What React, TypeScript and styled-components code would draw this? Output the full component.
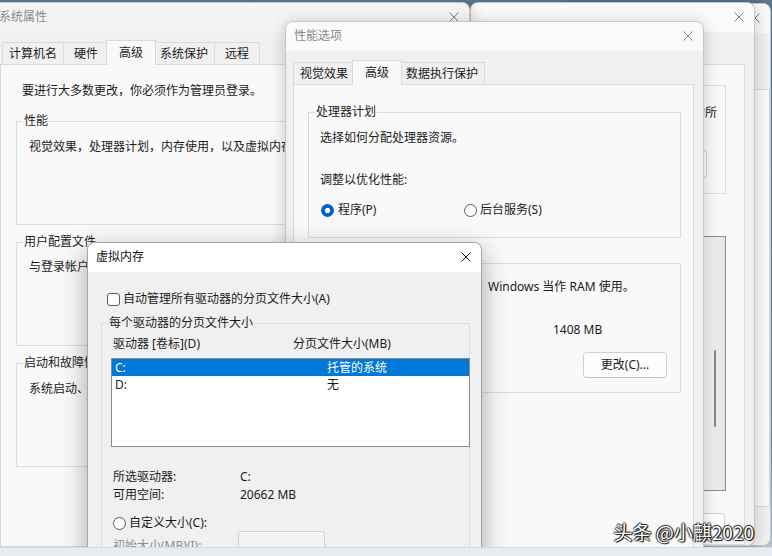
import React from 'react';
import styled, { createGlobalStyle, css } from 'styled-components';

const GlobalStyle = createGlobalStyle`
  html, body { margin: 0; padding: 0; }
  body {
    font-family: "Noto Sans", "Noto Sans CJK SC", sans-serif;
    font-size: 12px;
    line-height: 16px;
    color: #1b1b1b;
    background: #6f8aa0;
  }
  #root { width: 772px; height: 556px; }
`;

const Desktop = styled.main`
  position: relative;
  width: 772px;
  height: 556px;
  overflow: hidden;
  background: linear-gradient(180deg, #5d7b93 0%, #7893a8 80%, #c9d6e0 100%);
`;

type WinProps = {
  $left: number;
  $top: number;
  $width: number;
  $height: number;
  $z: number;
  $active?: boolean;
};

// dialogs sit on a free desktop, so the window itself is placed absolutely
const Window = styled.section<WinProps>`
  position: absolute;
  left: ${p => p.$left}px;
  top: ${p => p.$top}px;
  width: ${p => p.$width}px;
  height: ${p => p.$height}px;
  z-index: ${p => p.$z};
  box-sizing: border-box;
  display: flex;
  flex-direction: column;
  background: #f0f0f0;
  border: 1px solid ${p => (p.$active ? 'rgba(0,0,0,0.3)' : 'rgba(0,0,0,0.17)')};
  border-radius: 8px;
  overflow: hidden;
  box-shadow: ${p =>
    p.$active ? '0 8px 26px rgba(0,0,0,0.34)' : '0 2px 16px rgba(0,0,0,0.2)'};
`;

const TitleBar = styled.header<{ $active?: boolean; $tone?: string }>`
  flex: none;
  height: 29px;
  box-sizing: border-box;
  display: flex;
  align-items: center;
  justify-content: space-between;
  padding: 0 10px 1px 8px;
  background: ${p => p.$tone ?? '#fafafa'};
  color: ${p => (p.$active ? '#111' : '#8a8a8a')};
`;

const Title = styled.span`
  white-space: nowrap;
`;

const CloseGlyph = ({ active }: { active?: boolean }) => (
  <svg width="10" height="10" viewBox="0 0 10 10">
    <path
      d="M0.5 0.5L9.5 9.5M9.5 0.5L0.5 9.5"
      stroke={active ? '#1a1a1a' : '#7d7d7d'}
      strokeWidth="1"
      fill="none"
    />
  </svg>
);

const Body = styled.div<{ $pad: string }>`
  flex: 1;
  min-height: 0;
  display: flex;
  flex-direction: column;
  padding: ${p => p.$pad};
`;

const TabRow = styled.div<{ $indent?: number }>`
  flex: none;
  display: flex;
  align-items: flex-end;
  height: 25px;
  padding-left: ${p => p.$indent ?? 0}px;
  margin-bottom: -1px;
  position: relative;
  z-index: 1;
`;

const Tab = styled.div<{ $selected?: boolean }>`
  box-sizing: border-box;
  height: 22px;
  min-width: 46px;
  padding: 0 6px;
  margin: 0 -1px 1px 0;
  display: flex;
  align-items: center;
  justify-content: center;
  white-space: nowrap;
  background: #f0f0f0;
  border: 1px solid #d9d9d9;
  border-bottom: none;
  ${p =>
    p.$selected &&
    css`
      height: 25px;
      min-width: 50px;
      margin: 0 -3px 0 -2px;
      background: #f9f9f9;
      position: relative;
      z-index: 2;
    `}
`;

const TabPanel = styled.div<{ $pad: string }>`
  flex: 1;
  min-height: 0;
  display: flex;
  flex-direction: column;
  background: #f9f9f9;
  border: 1px solid #d9d9d9;
  padding: ${p => p.$pad};
`;

const Group = styled.fieldset<{ $height?: number; $mt?: number; $grow?: boolean }>`
  flex: ${p => (p.$grow ? 1 : 'none')};
  margin: ${p => p.$mt ?? 0}px 0 0 0;
  padding: 0;
  min-width: 0;
  box-sizing: border-box;
  height: ${p => (p.$height ? `${p.$height}px` : 'auto')};
  border: 1px solid #dcdcdc;
  display: flex;
  flex-direction: column;
`;

const Legend = styled.legend`
  margin-left: 6px;
  padding: 0 1px;
  line-height: 16px;
  white-space: nowrap;
`;

const GroupBody = styled.div<{ $pad: string }>`
  flex: 1;
  min-height: 0;
  display: flex;
  flex-direction: column;
  padding: ${p => p.$pad};
`;

const Line = styled.div<{ $mt?: number; $indent?: number; $muted?: boolean; $wrap?: boolean }>`
  margin-top: ${p => p.$mt ?? 0}px;
  margin-left: ${p => p.$indent ?? 0}px;
  white-space: ${p => (p.$wrap ? 'normal' : 'nowrap')};
  color: ${p => (p.$muted ? '#8d8d8d' : 'inherit')};
`;

const OptionRow = styled.div<{ $mt?: number; $cols?: string; $indent?: number }>`
  margin-top: ${p => p.$mt ?? 0}px;
  margin-left: ${p => p.$indent ?? 0}px;
  display: grid;
  grid-template-columns: ${p => p.$cols ?? 'auto'};
  align-items: center;
  white-space: nowrap;
`;

const Option = styled.label<{ $gap?: number }>`
  display: flex;
  align-items: center;
  gap: ${p => p.$gap ?? 4}px;
  white-space: nowrap;
`;

const RadioDot = styled.span<{ $on?: boolean }>`
  flex: none;
  box-sizing: border-box;
  width: 13px;
  height: 13px;
  border-radius: 50%;
  ${p =>
    p.$on
      ? css`
          background: radial-gradient(circle, #ffffff 0 2.4px, #0067c0 3px);
        `
      : css`
          background: #fcfcfc;
          border: 1px solid #5c5c5c;
        `}
`;

const CheckBox = styled.span`
  flex: none;
  box-sizing: border-box;
  width: 13px;
  height: 13px;
  border-radius: 3px;
  border: 1px solid #5c5c5c;
  background: #fcfcfc;
`;

const Button = styled.button<{ $w: number; $h: number; $mt?: number; $mr?: number }>`
  flex: none;
  align-self: flex-end;
  box-sizing: border-box;
  width: ${p => p.$w}px;
  height: ${p => p.$h}px;
  margin: ${p => p.$mt ?? 0}px ${p => p.$mr ?? 0}px 0 0;
  padding: 0;
  font: inherit;
  color: #1b1b1b;
  background: #fdfdfd;
  border: 1px solid #d2d2d2;
  border-bottom-color: #c2c2c2;
  border-radius: 4px;
`;

const ListBox = styled.div<{ $h: number; $mt?: number }>`
  flex: none;
  box-sizing: border-box;
  height: ${p => p.$h}px;
  margin: ${p => p.$mt ?? 0}px -1px 0 0;
  background: #ffffff;
  border: 1px solid #8c8c8c;
  display: flex;
  flex-direction: column;
`;

const ListRow = styled.div<{ $selected?: boolean }>`
  height: 17px;
  display: grid;
  grid-template-columns: 212px auto;
  align-items: center;
  padding-left: 3px;
  white-space: nowrap;
  ${p =>
    p.$selected &&
    css`
      background: #0078d7;
      color: #ffffff;
    `}
`;

const ListHeader = styled.div`
  margin-left: 2px;
  display: grid;
  grid-template-columns: 180px auto;
  white-space: nowrap;
`;

const InfoGrid = styled.div<{ $mt?: number }>`
  margin: ${p => p.$mt ?? 0}px 0 0 2px;
  display: grid;
  grid-template-columns: 127px auto;
  grid-auto-rows: 18px;
  white-space: nowrap;
`;

const SizeRow = styled.div`
  display: grid;
  grid-template-columns: 125px auto;
  margin-left: 2px;
  white-space: nowrap;
  color: #8d8d8d;
`;

const SizeLabel = styled.span`
  padding-top: 7px;
`;

const Field = styled.div`
  box-sizing: border-box;
  width: 87px;
  height: 23px;
  background: #f3f3f3;
  border: 1px solid #cfcfcf;
  border-radius: 3px;
`;

const Listing = styled.div<{ $h: number; $mt?: number }>`
  flex: none;
  box-sizing: border-box;
  height: ${p => p.$h}px;
  margin-top: ${p => p.$mt ?? 0}px;
  background: #ffffff;
  border: 1px solid #8c8c8c;
  display: flex;
  justify-content: flex-end;
`;

const ScrollTrack = styled.div`
  width: 21px;
  background: linear-gradient(90deg, #f4f4f4, #e4e4e4);
`;

const ScrollThumb = styled.div`
  width: 2px;
  height: 77px;
  margin: 113px 0 0 10px;
  border-radius: 1px;
  background: #8a8a8a;
`;

const Taskbar = styled.footer`
  position: absolute;
  left: 0;
  right: 0;
  bottom: 0;
  height: 8px;
  z-index: 10;
  background: #e6ecf1;
  border-top: 1px solid rgba(0, 0, 0, 0.07);
`;

const Watermark = styled.div`
  position: absolute;
  right: 18px;
  bottom: 13px;
  z-index: 11;
  font-family: "Noto Sans CJK SC", "Noto Sans", sans-serif;
  font-size: 19px;
  line-height: 22px;
  color: #ffffff;
  white-space: nowrap;
  text-shadow: 1px 1px 1px #111, -1px 0 1px #222, 0 -1px 1px #222, 1px 0 1px #222;
`;

export default function App() {
  return (
    <>
      <GlobalStyle />
      <Desktop>
        {/* window furthest back, only its right edge shows */}
        <Window $left={560} $top={3} $width={211} $height={543} $z={1}>
          <TitleBar>
            <Title />
            <CloseGlyph />
          </TitleBar>
          <Body $pad="56px 0 38px 0">
            <TabPanel $pad="0" />
          </Body>
        </Window>

        <Window $left={470} $top={2} $width={285} $height={544} $z={2}>
          <TitleBar>
            <Title />
            <CloseGlyph />
          </TitleBar>
          <Body $pad="8px 9px 0 9px">
            <TabRow $indent={2}>
              <Tab>常规</Tab>
              <Tab $selected>高级</Tab>
            </TabRow>
            <TabPanel $pad="12px 18px 0 18px">
              <Group $height={117}>
                <Legend>用户配置文件</Legend>
                <GroupBody $pad="12px 7px 0 13px">
                  <Line $wrap>此处的设置将应用于此台计算机上的所有用户。</Line>
                  <Button $w={84} $h={28} $mt={13} $mr={11}>
                    设置(E)...
                  </Button>
                </GroupBody>
              </Group>
              <Listing $h={255} $mt={42}>
                <ScrollTrack>
                  <ScrollThumb />
                </ScrollTrack>
              </Listing>
              <Button $w={84} $h={27} $mt={22} $mr={1}>
                确定
              </Button>
            </TabPanel>
          </Body>
        </Window>

        <Window $left={-10} $top={2} $width={480} $height={546} $z={3}>
          <TitleBar $tone="#f4f4f4">
            <Title>系统属性</Title>
            <CloseGlyph />
          </TitleBar>
          <Body $pad="8px 9px 0 9px">
            <TabRow $indent={2}>
              <Tab>计算机名</Tab>
              <Tab>硬件</Tab>
              <Tab $selected>高级</Tab>
              <Tab>系统保护</Tab>
              <Tab>远程</Tab>
            </TabRow>
            <TabPanel $pad="18px 14px 0 15px">
              <Line $indent={6}>要进行大多数更改，你必须作为管理员登录。</Line>
              <Group $height={112} $mt={14}>
                <Legend>性能</Legend>
                <GroupBody $pad="10px 12px 0 12px">
                  <Line>视觉效果，处理器计划，内存使用，以及虚拟内存</Line>
                </GroupBody>
              </Group>
              <Group $height={112} $mt={9}>
                <Legend>用户配置文件</Legend>
                <GroupBody $pad="9px 12px 0 12px">
                  <Line>与登录帐户相关的桌面设置</Line>
                </GroupBody>
              </Group>
              <Group $height={112} $mt={9}>
                <Legend>启动和故障恢复</Legend>
                <GroupBody $pad="10px 12px 0 12px">
                  <Line>系统启动、系统故障和调试信息</Line>
                </GroupBody>
              </Group>
            </TabPanel>
          </Body>
        </Window>

        <Window $left={285} $top={21} $width={419} $height={540} $z={4}>
          <TitleBar>
            <Title>性能选项</Title>
            <CloseGlyph />
          </TitleBar>
          <Body $pad="9px 9px 0 7px">
            <TabRow>
              <Tab>视觉效果</Tab>
              <Tab $selected>高级</Tab>
              <Tab>数据执行保护</Tab>
            </TabRow>
            <TabPanel $pad="19px 12px 0 14px">
              <Group $height={134}>
                <Legend>处理器计划</Legend>
                <GroupBody $pad="10px 12px 0 11px">
                  <Line>选择如何分配处理器资源。</Line>
                  <Line $mt={26}>调整以优化性能:</Line>
                  <OptionRow $mt={14} $cols="143px auto" $indent={1}>
                    <Option>
                      <RadioDot $on />
                      程序(P)
                    </Option>
                    <Option $gap={3}>
                      <RadioDot />
                      后台服务(S)
                    </Option>
                  </OptionRow>
                </GroupBody>
              </Group>
              <Group $height={138} $mt={17}>
                <Legend>虚拟内存</Legend>
                <GroupBody $pad="8px 12px 0 11px">
                  <Line>分页文件是硬盘上的一块区域，Windows 当作 RAM 使用。</Line>
                  <OptionRow $mt={27} $cols="233px auto">
                    <span>所有驱动器总分页文件大小:</span>
                    <span>1408 MB</span>
                  </OptionRow>
                  <Button $w={84} $h={26} $mt={14} $mr={1}>
                    更改(C)...
                  </Button>
                </GroupBody>
              </Group>
            </TabPanel>
          </Body>
        </Window>

        <Window $left={87} $top={242} $width={395} $height={330} $z={5} $active>
          <TitleBar $active $tone="#ffffff">
            <Title>虚拟内存</Title>
            <CloseGlyph active />
          </TitleBar>
          <Body $pad="19px 11px 0 13px">
            <OptionRow $indent={6}>
              <Option $gap={3}>
                <CheckBox />
                自动管理所有驱动器的分页文件大小(A)
              </Option>
            </OptionRow>
            <Group $mt={8} $grow>
              <Legend>每个驱动器的分页文件大小</Legend>
              <GroupBody $pad="5px 0 0 9px">
                <ListHeader>
                  <span>驱动器 [卷标](D)</span>
                  <span>分页文件大小(MB)</span>
                </ListHeader>
                <ListBox $h={89} $mt={6}>
                  <ListRow $selected>
                    <span>C:</span>
                    <span>托管的系统</span>
                  </ListRow>
                  <ListRow>
                    <span>D:</span>
                    <span>无</span>
                  </ListRow>
                </ListBox>
                <InfoGrid $mt={22}>
                  <span>所选驱动器:</span>
                  <span>C:</span>
                  <span>可用空间:</span>
                  <span>20662 MB</span>
                </InfoGrid>
                <OptionRow $mt={10} $indent={2}>
                  <Option $gap={3}>
                    <RadioDot />
                    自定义大小(C):
                  </Option>
                </OptionRow>
                <SizeRow>
                  <SizeLabel>初始大小(MB)(I):</SizeLabel>
                  <Field />
                </SizeRow>
              </GroupBody>
            </Group>
          </Body>
        </Window>

        <Taskbar />
        <Watermark>头条 @小麒2020</Watermark>
      </Desktop>
    </>
  );
}
